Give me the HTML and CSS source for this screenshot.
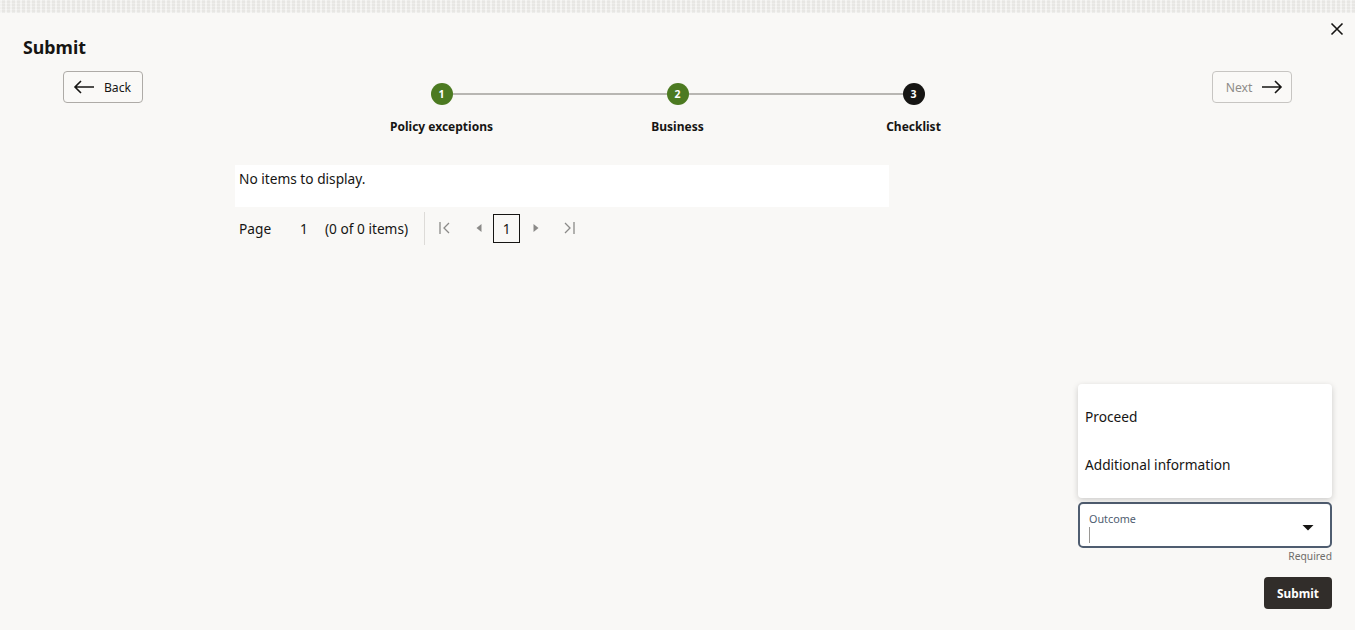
FILE: index.html
```html
<!DOCTYPE html>
<html lang="en">
<head>
<meta charset="utf-8">
<title>Submit</title>
<link rel="stylesheet" href="styles.css">
</head>
<body>
<div class="strip"></div>
<div class="dialog">
  <div class="header">
    <h1 class="title">Submit</h1>
    <button class="close" aria-label="Close">
      <svg width="14" height="14" viewBox="0 0 14 14"><path d="M1.5 1.5 L12.5 12.5 M12.5 1.5 L1.5 12.5" stroke="#161513" stroke-width="1.6" fill="none"/></svg>
    </button>
  </div>
  <div class="navrow">
    <button class="navbtn back">
      <svg width="22" height="14" viewBox="0 0 22 14"><path d="M21 7 H2 M8 1 L2 7 L8 13" stroke="#161513" stroke-width="1.6" fill="none"/></svg>
      <span>Back</span>
    </button>
    <div class="stepper">
      <div class="step first"><span class="dot done">1</span><span class="label">Policy exceptions</span></div>
      <div class="step"><span class="dot done">2</span><span class="label">Business</span></div>
      <div class="step last"><span class="dot current">3</span><span class="label">Checklist</span></div>
    </div>
    <button class="navbtn disabled">
      <span>Next</span>
      <svg width="22" height="14" viewBox="0 0 22 14"><path d="M1 7 H20 M14 1 L20 7 L14 13" stroke="#161513" stroke-width="1.6" fill="none"/></svg>
    </button>
  </div>
  <div class="content">
    <div class="table">No items to display.</div>
    <div class="pager">
      <span class="pg-label">Page</span>
      <span class="pg-num">1</span>
      <span class="pg-count">(0 of 0 items)</span>
      <span class="pg-sep"></span>
      <span class="pg-icon first-i">
        <svg width="14" height="14" viewBox="0 0 14 14"><path d="M2 1 V13 M11 2 L6 7 L11 12" stroke="#8b8a88" stroke-width="1.3" fill="none"/></svg>
      </span>
      <span class="pg-icon prev-i">
        <svg width="10" height="12" viewBox="0 0 10 12"><path d="M7.5 2 L2.5 6 L7.5 10 Z" fill="#8b8a88"/></svg>
      </span>
      <span class="pg-page">1</span>
      <span class="pg-icon next-i">
        <svg width="10" height="12" viewBox="0 0 10 12"><path d="M2.5 2 L7.5 6 L2.5 10 Z" fill="#8b8a88"/></svg>
      </span>
      <span class="pg-icon last-i">
        <svg width="14" height="14" viewBox="0 0 14 14"><path d="M3 2 L8 7 L3 12 M12 1 V13" stroke="#8b8a88" stroke-width="1.3" fill="none"/></svg>
      </span>
    </div>
  </div>
  <div class="footer">
    <div class="field-wrap">
      <ul class="menu">
        <li>Proceed</li>
        <li>Additional information</li>
      </ul>
      <div class="field">
        <div class="field-inner">
          <span class="field-label">Outcome</span>
          <span class="caret"></span>
        </div>
        <svg class="dd" width="12" height="8" viewBox="0 0 12 8"><path d="M0.5 1 H11.5 L6 6.5 Z" fill="#161513"/></svg>
      </div>
    </div>
    <div class="required">Required</div>
    <button class="submit">Submit</button>
  </div>
</div>
</body>
</html>
```

FILE: styles.css
```css
* { box-sizing: border-box; }
html, body { margin: 0; padding: 0; }
body {
  width: 1355px;
  height: 630px;
  overflow: hidden;
  background: #f9f8f6;
  font-family: "Noto Sans", "Open Sans", sans-serif;
  color: #161513;
  display: flex;
  flex-direction: column;
}
button { font-family: inherit; cursor: pointer; }

.strip {
  height: 13px;
  flex: none;
  background-color: #ecebe8;
  background-image:
    repeating-linear-gradient(90deg, rgba(255,255,255,0.35) 0 2px, rgba(0,0,0,0.02) 2px 5px),
    repeating-linear-gradient(0deg, rgba(255,255,255,0.3) 0 1px, transparent 1px 3px);
}

.dialog {
  flex: 1;
  display: flex;
  flex-direction: column;
  position: relative;
}

.header {
  display: flex;
  justify-content: space-between;
  align-items: flex-start;
  padding: 8px 11px 0 23px;
  height: 58px;
}
.title {
  margin: 14px 0 0;
  font-size: 17.8px;
  font-weight: 700;
  line-height: 24px;
}
.close {
  background: none;
  border: none;
  padding: 0;
  width: 14px;
  height: 14px;
  margin-top: 1px;
  margin-right: 0;
}
.close svg { display: block; }

.navrow {
  display: flex;
  justify-content: space-between;
  align-items: flex-start;
  padding: 0 63px 0 63px;
}
.navbtn {
  width: 80px;
  height: 32px;
  border: 1px solid #aeaba7;
  border-radius: 4px;
  background: #faf9f7;
  display: flex;
  align-items: center;
  justify-content: center;
  gap: 9px;
  font-size: 12.2px;
  color: #161513;
  padding: 0;
}
.navbtn.disabled { color: #8e8c89; border-color: #c7c5c2; padding-left: 5px; }
.navbtn svg { display: block; }
.navbtn.back { padding-right: 2px; }

.stepper {
  display: grid;
  grid-template-columns: repeat(3, 236px);
  margin-top: 12px;
}
.step {
  position: relative;
  display: flex;
  flex-direction: column;
  align-items: center;
}
.step::before, .step::after {
  content: "";
  position: absolute;
  top: 10px;
  height: 2px;
  background: #b8b6b2;
  width: calc(50% - 11px);
}
.step::before { left: 0; }
.step::after { right: 0; }
.step.first::before, .step.last::after { display: none; }
.dot {
  width: 22px;
  height: 22px;
  border-radius: 50%;
  color: #fff;
  font-size: 10.5px;
  font-weight: 700;
  display: flex;
  align-items: center;
  justify-content: center;
  line-height: 1;
}
.dot.done { background: #4c7a21; }
.dot.current { background: #161513; }
.label {
  margin-top: 13px;
  font-size: 12px;
  font-weight: 700;
  line-height: 18px;
}

.content {
  padding-left: 235px;
  margin-top: 29px;
}
.table {
  width: 654px;
  height: 42px;
  background: #fff;
  font-size: 13.7px;
  padding: 4px 4px;
  line-height: 20px;
}
.pager {
  display: flex;
  align-items: center;
  height: 38px;
  margin-top: 2px;
  padding-left: 4px;
  font-size: 13.7px;
}
.pg-label { width: 61px; }
.pg-num { width: 25px; }
.pg-count { margin-right: 16px; }
.pg-sep {
  width: 1px;
  height: 33px;
  background: #dddbd8;
  margin-right: 13px;
}
.pg-icon {
  display: flex;
  align-items: center;
  justify-content: center;
}
.pg-icon svg { display: block; }
.first-i { margin-right: 22px; }
.prev-i { margin-right: 9px; }
.next-i { margin-left: 11px; margin-right: 21px; }
.pg-page {
  width: 27px;
  height: 29px;
  border: 1px solid #161513;
  display: flex;
  align-items: center;
  justify-content: center;
}

.footer {
  margin-top: auto;
  align-self: flex-end;
  width: 254px;
  margin-right: 23px;
  margin-bottom: 21px;
  display: flex;
  flex-direction: column;
  align-items: flex-end;
}
.field-wrap {
  position: relative;
  width: 254px;
}
.menu {
  position: absolute;
  left: 0;
  bottom: 50px;
  width: 254px;
  height: 114px;
  margin: 0;
  padding: 9px 0 0;
  list-style: none;
  background: #fff;
  border-radius: 4px;
  box-shadow: 0 2px 6px rgba(0,0,0,0.18);
}
.menu li {
  font-size: 13.7px;
  line-height: 20px;
  padding: 14px 7px 14px 7px;
}
.field {
  height: 46px;
  border: 2px solid #4f5d70;
  border-radius: 5px;
  background: #fff;
  display: flex;
  align-items: flex-start;
  justify-content: space-between;
  padding: 8px 16px 0 9px;
}
.field-inner {
  display: flex;
  flex-direction: column;
}
.field-label {
  font-size: 10.8px;
  line-height: 14px;
  color: #4f5d70;
}
.caret {
  width: 1px;
  height: 16px;
  margin-top: 1px;
  background: #9a9895;
}
.dd { margin-top: 12px; display: block; }
.required {
  font-size: 10.3px;
  color: #6f6d6a;
  margin-top: 1px;
  line-height: 14px;
}
.submit {
  margin-top: 14px;
  width: 68px;
  height: 32px;
  border: none;
  border-radius: 4px;
  background: #312d2a;
  color: #fff;
  font-size: 11.8px;
  font-weight: 700;
  padding: 0;
}
```
